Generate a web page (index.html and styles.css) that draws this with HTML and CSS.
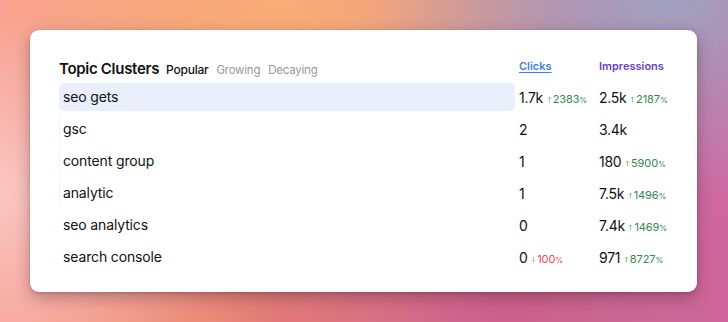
FILE: index.html
```html
<!DOCTYPE html>
<html>
<head>
<meta charset="utf-8">
<title>Topic Clusters</title>
<link rel="stylesheet" href="styles.css">
</head>
<body>
<div class="card">
  <div class="head">
    <div class="title">
      <h2>Topic Clusters</h2>
      <span class="tab active">Popular</span>
      <span class="tab">Growing</span>
      <span class="tab">Decaying</span>
    </div>
    <div class="col-clicks"><a href="#">Clicks</a></div>
    <div class="col-impr">Impressions</div>
  </div>

  <div class="row current">
    <div class="name">seo gets</div>
    <div class="num">1.7k <span class="delta up"><svg viewBox="0 0 6 8"><path d="M3 7.5V1M1 3l2-2 2 2"/></svg>2383<small>%</small></span></div>
    <div class="num">2.5k <span class="delta up"><svg viewBox="0 0 6 8"><path d="M3 7.5V1M1 3l2-2 2 2"/></svg>2187<small>%</small></span></div>
  </div>
  <div class="row trail">
    <div class="name">gsc</div>
    <div class="num">2</div>
    <div class="num">3.4k</div>
  </div>
  <div class="row trail">
    <div class="name">content group</div>
    <div class="num">1</div>
    <div class="num">180 <span class="delta up"><svg viewBox="0 0 6 8"><path d="M3 7.5V1M1 3l2-2 2 2"/></svg>5900<small>%</small></span></div>
  </div>
  <div class="row trail">
    <div class="name">analytic</div>
    <div class="num">1</div>
    <div class="num">7.5k <span class="delta up"><svg viewBox="0 0 6 8"><path d="M3 7.5V1M1 3l2-2 2 2"/></svg>1496<small>%</small></span></div>
  </div>
  <div class="row">
    <div class="name">seo analytics</div>
    <div class="num">0</div>
    <div class="num">7.4k <span class="delta up"><svg viewBox="0 0 6 8"><path d="M3 7.5V1M1 3l2-2 2 2"/></svg>1469<small>%</small></span></div>
  </div>
  <div class="row">
    <div class="name">search console</div>
    <div class="num">0 <span class="delta down"><svg viewBox="0 0 6 8"><path d="M3 .5V7M1 5l2 2 2-2"/></svg>100<small>%</small></span></div>
    <div class="num">971 <span class="delta up"><svg viewBox="0 0 6 8"><path d="M3 7.5V1M1 3l2-2 2 2"/></svg>8727<small>%</small></span></div>
  </div>
</div>
</body>
</html>
```

FILE: styles.css
```css
/* Topic clusters card */

html, body
{ margin: 0;
height: 100%;
}

body
{ font-family: Inter, "Noto Sans", sans-serif;
color: #111;
overflow: hidden;
padding: 30px 31px 30px 30px;
box-sizing: border-box;
background-color: #e99090;
background-image:
  radial-gradient(ellipse 260px 180px at 0% 60%, #f9c6c2 0%, rgba(249,198,194,0) 100%),
  radial-gradient(ellipse 300px 200px at 92% 0%, #9fa2bf 0%, rgba(159,162,191,0) 100%),
  radial-gradient(ellipse 320px 200px at 38% 0%, #f8ac76 0%, rgba(248,172,118,0) 100%),
  radial-gradient(ellipse 300px 220px at 70% 100%, #cc5e8c 0%, rgba(204,94,140,0) 100%),
  radial-gradient(ellipse 260px 160px at 40% 100%, #e88072 0%, rgba(232,128,114,0) 100%),
  linear-gradient(90deg, #f9a094 0%, #f0a080 40%, #c9809e 75%, #d068a0 100%);
}

.card
{ height: 262px;
box-sizing: border-box;
background: #fff;
border-radius: 9px;
padding: 26px 30px 0 29px;
box-shadow: 0 6px 16px rgba(70, 25, 45, 0.35), 0 1px 3px rgba(70, 25, 45, 0.2);
}

/* Header */

.head, .row
{ display: grid;
grid-template-columns: 456px 76px 76px;
column-gap: 4px;
align-items: center;
}

.head
{ height: 24px;
margin-bottom: 3px;
}

.title
{ display: flex;
align-items: baseline;
gap: 8px;
}

.title h2
{ margin: 0;
font-size: 15px;
font-weight: 600;
letter-spacing: -0.02em;
}

.tab
{ font-size: 11.5px;
color: #999;
font-weight: 400;
letter-spacing: -0.02em;
}

.tab.active
{ color: #111;
font-weight: 500;
font-size: 12px;
margin-left: -1px;
}

.col-clicks, .col-impr
{ font-size: 11px;
font-weight: 600;
margin-top: -4px;
}

.col-clicks a
{ color: #3d7ee8;
text-decoration: underline;
text-underline-offset: 2px;
}

.col-impr
{ color: #6b3fc4;
}

/* Rows */

.row
{ height: 28px;
margin-bottom: 4px;
font-size: 14px;
}

.row .name
{ height: 28px;
line-height: 28px;
padding-left: 4px;
border-radius: 5px;
letter-spacing: -0.01em;
}

.row.current .name
{ background: #eaf0fb;
}

.row.trail .name
{ box-shadow: inset 1px 0 0 #f3f3f5;
}

.num
{ white-space: nowrap;
letter-spacing: -0.02em;
}

.delta
{ font-size: 11px;
letter-spacing: -0.01em;
}

.delta svg
{ width: 5px;
height: 7px;
margin-right: 1px;
fill: none;
stroke-width: 1;
}

.delta small
{ font-size: 8px;
}

.up
{ color: #2f8a55;
}

.up svg
{ stroke: #7cbf96;
}

.down
{ color: #e6485a;
}

.down svg
{ stroke: #f09aa4;
}
```
